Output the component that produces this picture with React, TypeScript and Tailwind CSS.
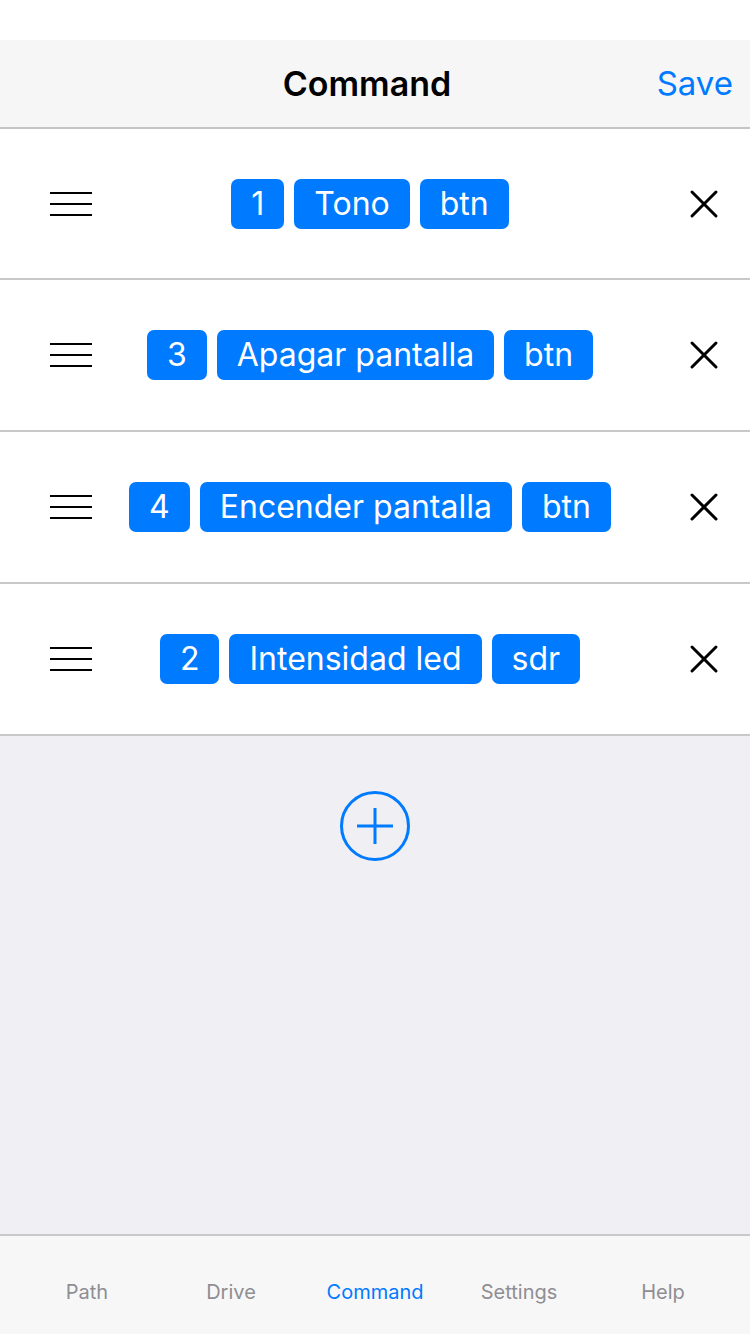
import { X } from 'lucide-react'

interface CommandRow {
  id: string
  name: string
  kind: string
}

const rows: CommandRow[] = [
  { id: '1', name: 'Tono', kind: 'btn' },
  { id: '3', name: 'Apagar pantalla', kind: 'btn' },
  { id: '4', name: 'Encender pantalla', kind: 'btn' },
  { id: '2', name: 'Intensidad led', kind: 'sdr' },
]

const tabs = ['Path', 'Drive', 'Command', 'Settings', 'Help']

function Pill({ children }: { children: React.ReactNode }) {
  return (
    <span className="h-[50px] px-[20px] flex items-center rounded-[7px] bg-[#007aff] text-white text-[32px] leading-none">
      {children}
    </span>
  )
}

function Hamburger() {
  return (
    <div className="w-[42px] flex flex-col gap-[9px]">
      <div className="h-[2px] bg-black" />
      <div className="h-[2px] bg-black" />
      <div className="h-[2px] bg-black" />
    </div>
  )
}

export default function App() {
  return (
    <div
      className="w-[750px] h-[1334px] flex flex-col bg-[#efeff4]"
      style={{ fontFamily: 'Inter, "Liberation Sans", sans-serif' }}
    >
      <div className="h-[40px] bg-white" />

      <header className="h-[89px] bg-[#f6f6f6] border-b-2 border-[#c4c4c4] flex items-center relative">
        <h1 className="flex-1 text-center text-[34px] font-semibold text-black pr-[16px]">Command</h1>
        <button className="absolute right-[17px] text-[33px] text-[#007aff]">Save</button>
      </header>

      <ul className="bg-white">
        {rows.map((row) => (
          <li
            key={row.id}
            className="h-[152px] first:h-[151px] border-b-2 border-[#c8c8c8] flex items-center pl-[50px] pr-[22px]"
          >
            <Hamburger />
            <div className="flex-1 flex justify-center gap-[10px]">
              <Pill>{row.id}</Pill>
              <Pill>{row.name}</Pill>
              <Pill>{row.kind}</Pill>
            </div>
            <div className="w-[80px] flex justify-end">
              <X size={48} strokeWidth={1.5} className="text-black" />
            </div>
          </li>
        ))}
      </ul>

      <div className="flex-1 flex justify-center pt-[54px]">
        <svg width="72" height="72" viewBox="0 0 72 72" fill="none" stroke="#007aff" strokeWidth="3">
          <circle cx="36" cy="36" r="33.5" />
          <path d="M36 18v36M18 36h36" />
        </svg>
      </div>

      <nav className="h-[100px] bg-[#f7f7f7] border-t-2 border-[#c8c8c8] grid grid-cols-5 px-[15px] pt-[44px]">
        {tabs.map((tab) => (
          <span
            key={tab}
            className={`text-center text-[20px] leading-[24px] ${tab === 'Command' ? 'text-[#007aff]' : 'text-[#8e8e93]'}`}
          >
            {tab}
          </span>
        ))}
      </nav>
    </div>
  )
}
